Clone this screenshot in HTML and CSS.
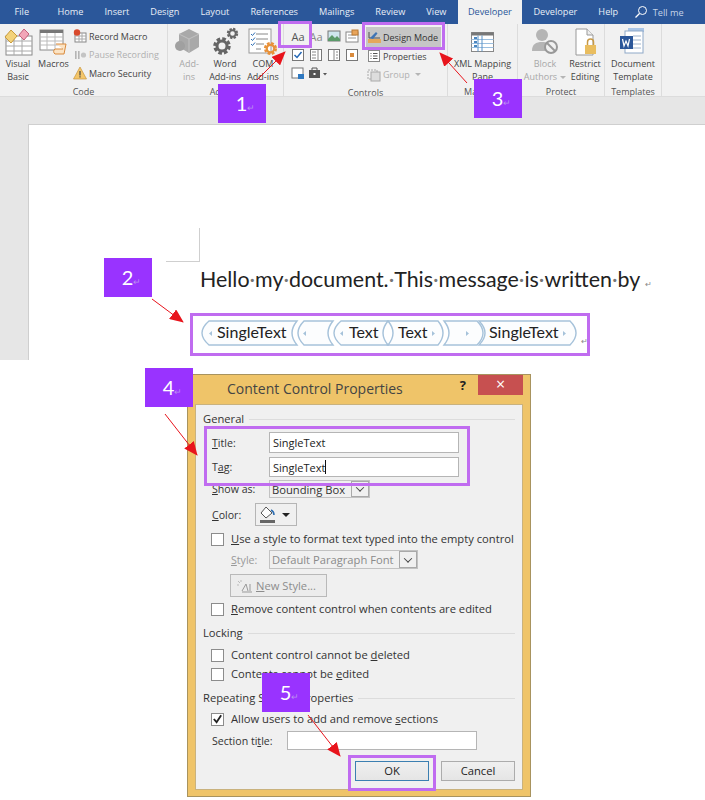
FILE: index.html
```html
<!DOCTYPE html>
<html lang="en">
<head>
    <meta charset="UTF-8">
    <meta name="viewport" content="width=device-width, initial-scale=1.0">
    <title>Content Control Properties</title>
    <link rel="stylesheet" href="styles.css">
</head>
<body>
    <svg class="defs" width="0" height="0">
        <defs>
            <symbol id="gear" viewBox="0 0 20 20">
                <circle cx="10" cy="10" r="7" fill="none" stroke="currentColor" stroke-width="3.5" stroke-dasharray="3.5 2"/>
                <circle cx="10" cy="10" r="5" fill="none" stroke="currentColor" stroke-width="3"/>
            </symbol>
            <marker id="head" markerUnits="userSpaceOnUse" markerWidth="14" markerHeight="12" refX="13" refY="6" orient="auto">
                <path d="M0 0 L14 6 L0 12 Z" fill="#e8141c"/>
            </marker>
        </defs>
    </svg>

    <div class="word">
        <!-- Tabs -->
        <div class="tabs">
            <span class="tab tab-file">File</span>
            <span class="tab">Home</span>
            <span class="tab">Insert</span>
            <span class="tab">Design</span>
            <span class="tab">Layout</span>
            <span class="tab">References</span>
            <span class="tab">Mailings</span>
            <span class="tab">Review</span>
            <span class="tab">View</span>
            <span class="tab tab-active">Developer</span>
            <span class="tab">Developer</span>
            <span class="tab">Help</span>
            <svg class="search" width="14" height="14" viewBox="0 0 14 14"><circle cx="8.5" cy="5.5" r="4" fill="none" stroke="#fff"/><path d="M5.5 8.5 L1.5 12.5" stroke="#fff" stroke-width="1.3"/></svg>
            <span class="tell">Tell me</span>
            <span class="tell-end">L</span>
        </div>

        <!-- Ribbon -->
        <div class="ribbon">
            <div class="group group-code">
                <div class="items">
                    <div class="big big-vb">
                        <svg width="32" height="30" viewBox="0 0 32 30"><rect x="4" y="9" width="26" height="19" fill="#fff" stroke="#8a8a8a"/><path d="M4 14h26M4 19h26M4 24h26M12 9v19M20 9v19" stroke="#aaa"/><path d="M3 10 L9 3 L15 9 L9 16 Z" fill="#f3d27a" stroke="#c89a3c"/><path d="M17 8 L22 2 L27 7 L22 13 Z" fill="#f2a6b8" stroke="#c4607c"/></svg>
                        <span>Visual<br>Basic</span>
                    </div>
                    <div class="big big-macros">
                        <svg width="32" height="30" viewBox="0 0 32 30"><rect x="2" y="3" width="23" height="20" fill="#fff" stroke="#8a8a8a"/><rect x="2" y="3" width="23" height="3" fill="#777"/><path d="M2 10h23M2 14h23M2 18h23M9 6v17M17 6v17" stroke="#bbb"/><path d="M18 17h10l-2 10H17a3 3 0 0 1 0-5h8" fill="#fbe3c4" stroke="#d98a3c"/></svg>
                        <span>Macros</span>
                    </div>
                    <div class="smalls">
                        <div class="small">
                            <svg width="14" height="14" viewBox="0 0 14 14"><rect x="2" y="4" width="11" height="9" fill="#fff" stroke="#888"/><path d="M2 7h11M2 10h11M6 4v9M9 4v9" stroke="#aaa"/><circle cx="4" cy="3.5" r="3.2" fill="#d8492c"/></svg>
                            <span>Record Macro</span>
                        </div>
                        <div class="small small-off">
                            <svg width="14" height="14" viewBox="0 0 14 14"><path d="M2 3h1.6v8H2zM5 3h1.6v8H5z" fill="#b5b5b5"/><circle cx="10.5" cy="7" r="2.6" fill="#c4c4c4"/></svg>
                            <span>Pause Recording</span>
                        </div>
                        <div class="small">
                            <svg width="14" height="14" viewBox="0 0 14 14"><path d="M7 1 L13.5 13 H0.5 Z" fill="#f4c66a" stroke="#c9973f" stroke-width=".7"/><path d="M6.4 5h1.2v4.4H6.4zM6.4 10.2h1.2v1.3H6.4z" fill="#444"/></svg>
                            <span>Macro Security</span>
                        </div>
                    </div>
                </div>
                <div class="group-label">Code</div>
            </div>

            <div class="group group-addins">
                <div class="items">
                    <div class="big big-addin big-off">
                        <svg width="32" height="30" viewBox="0 0 32 30"><path d="M16 2 L26 7 V20 L16 26 L6 20 V7 Z" fill="#a9a9a9"/><path d="M6 7 L16 12 L26 7 M16 12 V26" fill="none" stroke="#c2c2c2"/><circle cx="7" cy="19" r="5" fill="#a0a0a0"/></svg>
                        <span>Add-<br>ins</span>
                    </div>
                    <div class="big big-word">
                        <svg class="gears" width="32" height="30" viewBox="0 0 32 30"><use href="#gear" x="3" y="9" width="20" height="20"/><use href="#gear" x="17" y="0" width="13" height="13"/></svg>
                        <span>Word<br>Add-ins</span>
                    </div>
                    <div class="big big-com">
                        <svg width="34" height="30" viewBox="0 0 34 30"><rect x="3" y="2" width="22" height="24" fill="#fff" stroke="#999"/><path d="M10 7h12M10 12h12M10 17h8M10 22h5" stroke="#888"/><path d="M5 7l1.5 1.5L9 5.500M5 12l1.500 1.500L9 10.500M5 17l1.500 1.500L9 15.500" fill="none" stroke="#2f6fb5"/><use href="#gear" class="gear-orange" x="17" y="14" width="15" height="15"/></svg>
                        <span>COM<br>Add-ins</span>
                    </div>
                </div>
                <div class="group-label">Add-ins</div>
            </div>

            <div class="group group-controls">
                <div class="items">
                    <div class="control-grid">
                        <span class="ctl ctl-aa">Aa</span>
                        <span class="ctl ctl-aa ctl-aa2">Aa</span>
                        <svg class="ctl" width="14" height="14" viewBox="0 0 14 14"><rect x="1" y="2" width="12" height="10" fill="#cfe6ee" stroke="#777"/><path d="M1 10 L5 6 L8 9 L10 7 L13 10 V12 H1 Z" fill="#5b9a6a"/></svg>
                        <svg class="ctl" width="14" height="14" viewBox="0 0 14 14"><rect x="1" y="3" width="12" height="10" fill="#fff" stroke="#888"/><path d="M3 6h8M3 9h8" stroke="#999"/><rect x="7" y="1" width="6" height="5" fill="#e8a45a" stroke="#b97a34"/></svg>
                        <svg class="ctl" width="14" height="14" viewBox="0 0 14 14"><rect x="1.500" y="1.500" width="11" height="11" fill="#fff" stroke="#777"/><path d="M3.500 7l2.500 2.500L10.500 4" fill="none" stroke="#2467b5" stroke-width="1.500"/></svg>
                        <svg class="ctl" width="14" height="14" viewBox="0 0 14 14"><rect x="1.500" y="1.500" width="11" height="11" fill="#fff" stroke="#777"/><path d="M9 1.500v11M3 4h4M3 7h4M3 10h4" stroke="#888"/></svg>
                        <svg class="ctl" width="14" height="14" viewBox="0 0 14 14"><rect x="1.500" y="1.500" width="11" height="11" fill="#fff" stroke="#777"/><path d="M7 1.500v11M9 4h2M9 7h2M9 10h2" stroke="#888"/></svg>
                        <svg class="ctl" width="14" height="14" viewBox="0 0 14 14"><rect x="1.500" y="1.500" width="11" height="11" fill="#fff" stroke="#777"/><rect x="5" y="5" width="4" height="4" fill="#d98a3c"/></svg>
                        <svg class="ctl" width="14" height="14" viewBox="0 0 14 14"><rect x="1" y="2" width="11" height="10" fill="#fff" stroke="#777"/><rect x="7" y="8" width="6" height="5" fill="#2e78c0"/></svg>
                        <svg class="ctl ctl-case" width="20" height="14" viewBox="0 0 20 14"><rect x="1" y="4" width="11" height="8" fill="#555"/><path d="M4 4V2h5v2" fill="none" stroke="#555"/><rect x="5.500" y="7" width="2" height="2" fill="#fff"/><path d="M15 7h4l-2 2.500z" fill="#555"/></svg>
                    </div>
                    <div class="smalls smalls-mode">
                        <div class="small small-mode">
                            <svg width="15" height="14" viewBox="0 0 15 14"><path d="M2 2v6h11" fill="none" stroke="#555"/><path d="M3 8L9 2l1.500 1.500L6 9z" fill="#3f74b5"/><rect x="1" y="9" width="13" height="4" fill="#e5a75c"/></svg>
                            <span>Design Mode</span>
                        </div>
                        <div class="small">
                            <svg width="14" height="14" viewBox="0 0 14 14"><rect x="1.500" y="1.500" width="11" height="11" fill="#fff" stroke="#888"/><path d="M3.500 4.500h1M3.500 7h1M3.500 9.500h1M6 4.500h4.500M6 7h4.500M6 9.500h4.500" stroke="#555"/></svg>
                            <span>Properties</span>
                        </div>
                        <div class="small small-off">
                            <svg width="14" height="14" viewBox="0 0 14 14"><rect x="1" y="2" width="9" height="9" fill="none" stroke="#aaa" stroke-dasharray="2 1"/><rect x="4" y="4" width="9" height="9" fill="#ddd" stroke="#aaa"/></svg>
                            <span>Group</span><i class="caret caret-off"></i>
                        </div>
                    </div>
                </div>
                <div class="group-label">Controls</div>
            </div>

            <div class="group group-mapping">
                <div class="items">
                    <div class="big big-xml">
                        <svg width="26" height="24" viewBox="0 0 26 24"><rect x="1.500" y="2.500" width="22" height="19" fill="#fff" stroke="#888"/><rect x="1.500" y="2.500" width="22" height="3" fill="#777"/><path d="M1.500 9.500h22M1.500 13.500h22M1.500 17.500h22" stroke="#9bbfe0"/><path d="M8 5.500v16M12 5.500v16" stroke="#5b93c8"/><rect x="4" y="7" width="3" height="2" fill="#4a86c0"/><rect x="4" y="11" width="3" height="2" fill="#4a86c0"/><rect x="4" y="15" width="3" height="2" fill="#4a86c0"/></svg>
                        <span>XML Mapping<br>Pane</span>
                    </div>
                </div>
                <div class="group-label">Mapping</div>
            </div>

            <div class="group group-protect">
                <div class="items">
                    <div class="big big-block big-off">
                        <svg width="28" height="30" viewBox="0 0 28 30"><circle cx="11" cy="8" r="6" fill="#b5b5b5"/><path d="M1 24c0-7 4-9 10-9s10 2 10 9z" fill="#b5b5b5"/><circle cx="20" cy="20" r="6" fill="#f1f1f1" stroke="#999" stroke-width="2"/><path d="M16 16l8 8" stroke="#999" stroke-width="2"/></svg>
                        <span>Block<br>Authors<i class="caret caret-off"></i></span>
                    </div>
                    <div class="big big-restrict">
                        <svg width="28" height="30" viewBox="0 0 28 30"><path d="M5 2h11l6 6v20H5z" fill="#fff" stroke="#999"/><path d="M16 2v6h6" fill="#eee" stroke="#999"/><rect x="14" y="18" width="11" height="9" fill="#e9bd5f"/><path d="M16.500 18v-3a3 3 0 0 1 6 0v3" fill="none" stroke="#c79a48" stroke-width="1.500"/></svg>
                        <span>Restrict<br>Editing</span>
                    </div>
                </div>
                <div class="group-label">Protect</div>
            </div>

            <div class="group group-templates">
                <div class="items">
                    <div class="big big-template">
                        <svg width="28" height="30" viewBox="0 0 28 30"><rect x="9" y="1" width="16" height="4" fill="#a9c5e6"/><rect x="6" y="4" width="18" height="22" fill="#fff" stroke="#8fa9c8"/><path d="M14 9h8M14 13h8M14 17h8M14 21h8" stroke="#9fb4cc"/><rect x="1" y="9" width="13" height="13" fill="#2a5699"/><path d="M3.500 12l1.500 7 2-5 2 5 1.500-7" fill="none" stroke="#fff" stroke-width="1.200"/></svg>
                        <span>Document<br>Template</span>
                    </div>
                </div>
                <div class="group-label">Templates</div>
            </div>
        </div>

        <!-- Document -->
        <div class="doc">
            <div class="page">
                <div class="crop"></div>
                <p class="hello">Hello<i>·</i>my<i>·</i>document.<i>·</i>This<i>·</i>message<i>·</i>is<i>·</i>written<i>·</i>by <span class="mark">↵</span></p>
                <div class="controls-line">
                    <svg width="376" height="26" viewBox="0 0 376 26">
                        <g fill="#fcfdfe" stroke="#a6c2da" stroke-width="1.400">
                            <path d="M8 1H96 Q86 13 96 25 H8 Q-6 13 8 1Z"/>
                            <path d="M103 1H132 Q122 13 132 25 H103 Q91 13 103 1Z"/>
                            <path d="M140 1H187 Q177 13 187 25 H140 Q126 13 140 1Z"/>
                            <path d="M187 1H237 Q247 13 237 25 H187 Q197 13 187 1Z"/>
                            <path d="M243 1H276 Q288 13 276 25 H243 Q253 13 243 1Z"/>
                            <path d="M278 1H369 Q381 13 369 25 H278 Q290 13 278 1Z"/>
                        </g>
                        <g fill="#a6c2da">
                            <path d="M11 11l-3 2.500 3 2.500z"/>
                            <path d="M105 11l-3 2.500 3 2.500z"/>
                            <path d="M142 11l-3 2.500 3 2.500z"/>
                            <path d="M231 11l3 2.500-3 2.500z"/>
                            <path d="M265 11l3 2.500-3 2.500z"/>
                            <path d="M362 11l3 2.500-3 2.500z"/>
                        </g>
                        <g class="cc-text">
                            <text x="16" y="18">SingleText</text>
                            <text x="148" y="18">Text</text>
                            <text x="197" y="18">Text</text>
                            <text x="288" y="18">SingleText</text>
                        </g>
                    </svg>
                    <span class="mark">↵</span>
                </div>
            </div>
        </div>
    </div>

    <!-- Content Control Properties dialog -->
    <div class="dialog">
        <div class="titlebar">
            <span class="title">Content Control Properties</span>
            <span class="help">?</span>
            <span class="close">×</span>
        </div>
        <div class="panel">
            <div class="legend"><span>General</span><i></i></div>
            <div class="row mt-6 h-21"><label class="lbl lbl-field"><u>T</u>itle:</label><div class="input">SingleText</div></div>
            <div class="row mt-4 h-20"><label class="lbl lbl-field">T<u>a</u>g:</label><div class="input">SingleText<b class="cursor"></b></div></div>
            <div class="row mt-3 h-18"><label class="lbl lbl-field"><u>S</u>how as:</label><div class="select select-show"><span>Bounding Box</span><em><i class="chev"></i></em></div></div>
            <div class="row mt-5 h-23">
                <label class="lbl lbl-color"><u>C</u>olor:</label>
                <div class="colorbtn">
                    <svg width="18" height="18" viewBox="0 0 18 18"><path d="M7 1 L13 7 L7 12 L2 7 Z" fill="#fff" stroke="#555"/><path d="M12 4c2 1 3 3 3 5" fill="none" stroke="#2b6cb0" stroke-width="1.500"/><rect x="1" y="14" width="15" height="3" fill="#666"/></svg>
                    <i class="caret caret-dark"></i>
                </div>
            </div>
            <div class="row mt-6 h-14 check-row"><span class="check"></span><span><u>U</u>se a style to format text typed into the empty control</span></div>
            <div class="row mt-4 h-19 off">
                <label class="lbl lbl-style"><u>S</u>tyle:</label>
                <div class="select select-style"><span>Default Paragraph Font</span><em><i class="chev"></i></em></div>
            </div>
            <div class="row mt-5 h-23"><div class="newstyle"><svg width="18" height="14" viewBox="0 0 18 14"><path d="M2 2l2 2M5 1v2M1 6h2" stroke="#bbb"/><path d="M6 12L10 5l2 7M14 5v7" fill="none" stroke="#999"/><path d="M6 13h10" stroke="#999"/></svg><span><u>N</u>ew Style...</span></div></div>
            <div class="row mt-5 h-14 check-row"><span class="check"></span><span><u>R</u>emove content control when contents are edited</span></div>

            <div class="legend mt-10"><span>Locking</span><i></i></div>
            <div class="row mt-8 h-14 check-row"><span class="check"></span><span>Content control cannot be <u>d</u>eleted</span></div>
            <div class="row mt-5 h-14 check-row"><span class="check"></span><span>Contents cannot be <u>e</u>dited</span></div>

            <div class="legend mt-10"><span>Repeating Section Properties</span><i></i></div>
            <div class="row mt-7 h-14 check-row"><span class="check"><svg width="12" height="12" viewBox="0 0 12 12"><path d="M2 6l3 3.500L10 2" fill="none" stroke="#222" stroke-width="2"/></svg></span><span>Allow users to add and remove <u>s</u>ections</span></div>
            <div class="row mt-5 h-19"><label class="lbl lbl-section">Section ti<u>t</u>le:</label><div class="input input-section"></div></div>

            <div class="buttons">
                <div class="btn btn-ok">OK</div>
                <div class="btn">Cancel</div>
            </div>
        </div>
    </div>

    <!-- Annotations drawn over the screenshot -->
    <svg class="arrows" width="705" height="800" viewBox="0 0 705 800">
        <g stroke="#e8141c" stroke-width="1" marker-end="url(#head)">
            <line x1="257" y1="80" x2="285" y2="52"/>
            <line x1="467" y1="83" x2="440" y2="53"/>
            <line x1="152" y1="299" x2="183" y2="322"/>
            <line x1="165" y1="414" x2="197" y2="455"/>
            <line x1="308" y1="715" x2="340" y2="756"/>
        </g>
    </svg>
    <div class="frame frame-1"></div>
    <div class="frame frame-2"></div>
    <div class="frame frame-3"></div>
    <div class="frame frame-4"></div>
    <div class="frame frame-5"></div>
    <div class="badge badge-1">1<span>↵</span></div>
    <div class="badge badge-2">2<span>↵</span></div>
    <div class="badge badge-3">3<span>↵</span></div>
    <div class="badge badge-4">4<span>↵</span></div>
    <div class="badge badge-5">5<span>↵</span></div>
</body>
</html>
```

FILE: styles.css
```css
* {
    box-sizing: border-box;
}

body {
    margin: 0;
    width: 705px;
    height: 800px;
    position: relative;
    overflow: hidden;
    background: #fff;
    font-family: "Open Sans", Arial, sans-serif;
    font-size: 9px;
    color: #444;
}

.defs {
    position: absolute;
}

.word {
    height: 360px;
    display: flex;
    flex-direction: column;
}

/* tabs */
.tabs {
    height: 24px;
    background: #2b579a;
    display: flex;
    align-items: center;
    color: #e8eef7;
    font-size: 9.2px;
    white-space: nowrap;
}

.tabs > * {
    flex-shrink: 0;
}

.tab {
    padding: 0 10.5px;
    line-height: 24px;
}

.tab-file {
    margin-left: 4px;
    padding-right: 18px;
}

.tab-active {
    background: #f1f1f1;
    color: #2b579a;
    margin: 0 1px;
    height: 24px;
    padding: 0 10px;
}

.search {
    margin-left: 5px;
}

.tell {
    margin-left: 5px;
    color: #c5d3e8;
}

.tell-end {
    margin-left: 21px;
}

/* ribbon */
.ribbon {
    height: 73px;
    background: #f1f1f1;
    border-bottom: 1px solid #dcdcdc;
    display: flex;
}

.group {
    height: 72px;
    display: flex;
    flex-direction: column;
    border-right: 1px solid #dcdcdc;
    line-height: 13px;
}

.group-code { width: 168px; }
.group-addins { width: 116px; }
.group-controls { width: 164px; }
.group-mapping { width: 70px; }
.group-protect { width: 87px; }
.group-templates { width: 57px; }

.items {
    flex: 1;
    display: flex;
    padding-top: 3px;
}

.group-label {
    height: 14px;
    line-height: 17px;
    text-align: center;
    color: #555;
}

.big {
    display: flex;
    flex-direction: column;
    align-items: center;
    text-align: center;
    white-space: nowrap;
}

.big svg {
    height: 30px;
}

.big-off {
    color: #a8a8a8;
}

.big-vb { width: 36px; }
.big-macros { width: 35px; }
.big-addin { width: 36px; margin-left: 3px; }
.big-word { width: 36px; }
.big-com { width: 36px; margin-left: 2px; }
.big-xml { width: 70px; }
.big-block { width: 44px; margin-left: 5px; }
.big-restrict { width: 36px; }
.big-template { width: 57px; }

.gears {
    color: #666;
}

.gear-orange {
    color: #e8913a;
}

.smalls {
    margin-left: 2px;
    display: flex;
    flex-direction: column;
}

.small {
    height: 18.5px;
    display: flex;
    align-items: center;
    gap: 2px;
    white-space: nowrap;
}

.small-off {
    color: #b0b0b0;
}

.small-mode {
    width: 75px;
    background: #c6c6c6;
    height: 20px;
    padding-left: 1px;
    gap: 1px;
    color: #333;
}

.smalls-mode {
    margin-left: 5px;
}

.smalls-mode .small:not(.small-mode) {
    padding-left: 1px;
    gap: 2px;
}

.control-grid {
    width: 72px;
    margin-left: 5px;
    display: grid;
    grid-template-columns: repeat(4, 18px);
    grid-auto-rows: 18.5px;
    align-items: center;
    justify-items: center;
}

.ctl-aa {
    font-size: 11px;
    line-height: 15px;
    color: #555;
}

.ctl-aa2 {
    color: #888;
}

.ctl-case {
    grid-column: span 2;
    justify-self: start;
    margin-left: 1px;
}

.caret {
    display: inline-block;
    border-left: 3px solid transparent;
    border-right: 3px solid transparent;
    border-top: 3px solid #777;
    margin-left: 3px;
    vertical-align: middle;
}

.caret-off {
    border-top-color: #b5b5b5;
}

.caret-dark {
    border-left-width: 4px;
    border-right-width: 4px;
    border-top: 4px solid #222;
    margin-left: 5px;
}

/* document */
.doc {
    flex: 1;
    background: #e6e6e6;
    padding: 27px 0 0 28px;
}

.page {
    height: 100%;
    background: #fff;
    border-top: 1px solid #cfcfcf;
    border-left: 1px solid #cfcfcf;
}

.crop {
    width: 34px;
    height: 34px;
    margin: 103px 0 0 137px;
    border-right: 1px solid #cfcfcf;
    border-bottom: 1px solid #cfcfcf;
}

.hello {
    margin: 2px 0 0 171px;
    font-family: Lato, "Open Sans", sans-serif;
    font-size: 21.4px;
    line-height: 30px;
    color: #222;
    white-space: nowrap;
}

.hello i {
    font-style: normal;
    color: #777;
}

.mark {
    font-size: 8px;
    color: #888;
}

.controls-line {
    margin: 21px 0 0 172px;
    display: flex;
    align-items: flex-end;
    gap: 4px;
}

.cc-text {
    font-family: Lato, "Open Sans", sans-serif;
    font-size: 16px;
    fill: #222;
}

/* dialog */
.dialog {
    position: absolute;
    left: 187px;
    top: 374px;
    width: 344px;
    height: 423px;
    background: #efc469;
    border: 1px solid #a8935e;
    padding: 0 7px 6px 7px;
    display: flex;
    flex-direction: column;
    font-size: 11.2px;
    color: #333;
}

.titlebar {
    height: 29px;
    display: flex;
    align-items: flex-start;
    flex-shrink: 0;
}

.title {
    font-size: 14px;
    line-height: 28px;
    margin-left: 32px;
    color: #444;
}

.help {
    margin-left: 57px;
    font-size: 13px;
    font-weight: bold;
    line-height: 20px;
    color: #222;
}

.close {
    margin-left: 12px;
    width: 45px;
    height: 20px;
    background: #c75050;
    color: #fff;
    font-size: 16px;
    line-height: 18px;
    text-align: center;
}

.panel {
    flex: 1;
    background: #f0f0f0;
    border: 1px solid #c9b27e;
    padding: 7px 7px 0 7px;
}

.legend {
    height: 14px;
    display: flex;
    align-items: center;
    gap: 5px;
    white-space: nowrap;
}

.legend span,
.check-row > span:last-child {
    padding-bottom: 2px;
}

.legend i {
    flex: 1;
    border-top: 1px solid #dcdcdc;
}

.row {
    display: flex;
    align-items: center;
    white-space: nowrap;
}

.mt-3 { margin-top: 3px; }
.mt-4 { margin-top: 4px; }
.mt-5 { margin-top: 5px; }
.mt-6 { margin-top: 6px; }
.mt-7 { margin-top: 7px; }
.mt-8 { margin-top: 8px; }
.mt-10 { margin-top: 10px; }
.h-14 { height: 14px; }
.h-18 { height: 18px; }
.h-19 { height: 19px; }
.h-20 { height: 20px; }
.h-21 { height: 21px; }
.h-23 { height: 23px; }

.lbl {
    font-size: 10.6px;
}

.lbl-field {
    width: 57px;
    margin-left: 9px;
}

.lbl-color {
    width: 43px;
    margin-left: 9px;
}

.lbl-style {
    width: 38px;
    margin-left: 28px;
    color: #999;
}

.lbl-section {
    width: 75px;
    margin-left: 9px;
}

.input {
    width: 190px;
    height: 100%;
    background: #fff;
    border: 1px solid #b5b5b5;
    padding-left: 3px;
    display: flex;
    align-items: center;
    font-size: 11px;
    color: #222;
}

.cursor {
    width: 1px;
    height: 14px;
    background: #111;
}

.select {
    height: 100%;
    display: flex;
    align-items: center;
    background: #f0f0f0;
    border: 1px solid #c2c2c2;
    padding-left: 2px;
}

.select span {
    flex: 1;
}

.select em {
    width: 18px;
    height: 100%;
    border: 1px solid #a9a9a9;
    display: flex;
    align-items: center;
    justify-content: center;
    flex-shrink: 0;
}

.select-show {
    width: 101px;
}

.select-style {
    width: 149px;
}

.chev {
    width: 6px;
    height: 6px;
    border-right: 1.5px solid #444;
    border-bottom: 1.5px solid #444;
    transform: rotate(45deg) translate(-1px, -1px);
}

.colorbtn {
    width: 42px;
    height: 100%;
    border: 1px solid #b5b5b5;
    display: flex;
    align-items: center;
    padding-left: 3px;
}

.check-row {
    gap: 7px;
    padding-left: 8px;
}

.check {
    width: 13px;
    height: 13px;
    background: #fff;
    border: 1px solid #8c8c8c;
    display: flex;
    align-items: center;
    justify-content: center;
    flex-shrink: 0;
}

.off {
    color: #8a8a8a;
}

.newstyle {
    margin-left: 27px;
    width: 97px;
    height: 100%;
    border: 1px solid #b9b9b9;
    background: #ececec;
    color: #8c8c8c;
    display: flex;
    align-items: center;
    gap: 2px;
    padding-left: 5px;
}

.buttons {
    margin-top: 11px;
    height: 20px;
    display: flex;
    justify-content: flex-end;
    gap: 12px;
}

.btn {
    width: 74px;
    height: 20px;
    border: 1px solid #acacac;
    background: linear-gradient(#f0f0f0, #e5e5e5);
    text-align: center;
    line-height: 18px;
    color: #222;
}

.btn-ok {
    border-color: #3c7fb1;
}

/* annotations */
.arrows {
    position: absolute;
    left: 0;
    top: 0;
}

.frame {
    position: absolute;
    border: 3px solid #c06cf0;
}

.frame-1 { left: 278px; top: 21px; width: 34px; height: 27px; }
.frame-2 { left: 190px; top: 313px; width: 400px; height: 43px; }
.frame-3 { left: 362px; top: 22px; width: 83px; height: 28px; }
.frame-4 { left: 204px; top: 426px; width: 266px; height: 60px; }
.frame-5 { left: 348px; top: 755px; width: 88px; height: 36px; }

.badge {
    position: absolute;
    width: 48px;
    height: 39px;
    padding-left: 7px;
    background: #9933ff;
    color: #fff;
    font-family: Lato, "Open Sans", sans-serif;
    font-size: 20px;
    line-height: 39px;
    text-align: center;
}

.badge span {
    font-size: 9px;
    color: #b98cf0;
}

.badge-1 { left: 218px; top: 84px; }
.badge-2 { left: 104px; top: 258px; }
.badge-3 { left: 474px; top: 79px; }
.badge-4 { left: 145px; top: 368px; }
.badge-5 { left: 262px; top: 673px; }
```
